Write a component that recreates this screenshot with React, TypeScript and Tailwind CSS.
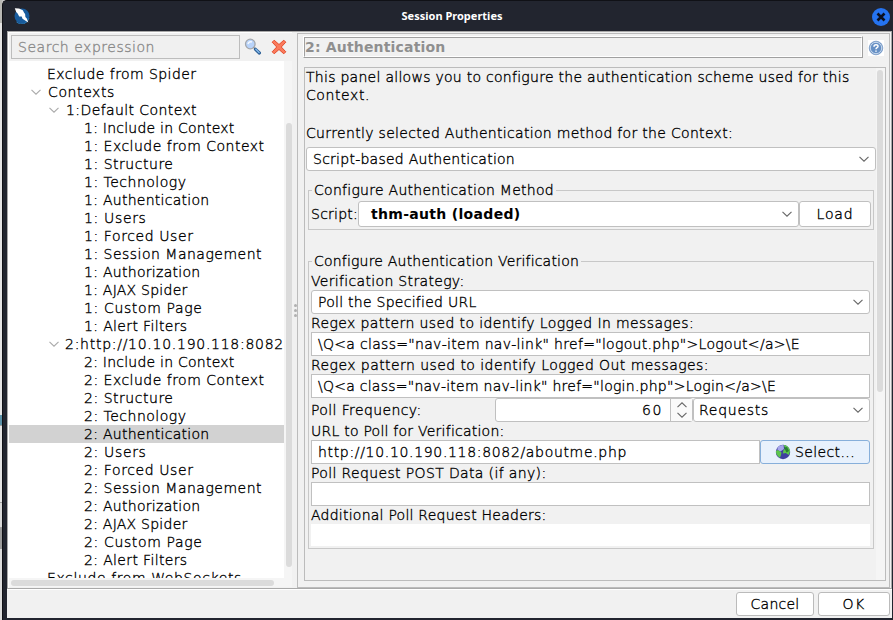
import React from "react";

/* Label whose advance widths are spread evenly over a given width. */
function Txt({ children, w, className = "" }: { children: string; w: number; className?: string }) {
  const ref = React.useRef<HTMLSpanElement>(null);
  const [ls, setLs] = React.useState(0);
  React.useLayoutEffect(() => {
    const el = ref.current!;
    const natural = el.getBoundingClientRect().width;
    setLs((w - natural) / children.length);
  }, []);
  return (
    <span ref={ref} style={{ letterSpacing: ls }} className={`inline-block shrink-0 whitespace-pre ${className}`}>
      {children}
    </span>
  );
}

function Chevron({ className = "text-[#666]", up = false }: { className?: string; up?: boolean }) {
  return (
    <svg width="10" height="6" viewBox="0 0 10 6" className={`shrink-0 ${className}`} fill="none" stroke="currentColor" strokeWidth="1.1">
      <path d={up ? "M0.5 5.2 5 0.8 9.5 5.2" : "M0.5 0.8 5 5.2 9.5 0.8"} />
    </svg>
  );
}

const pages: [string, number][] = [
  ["Include in Context", 150],
  ["Exclude from Context", 180],
  ["Structure", 89],
  ["Technology", 102],
  ["Authentication", 125],
  ["Users", 62],
  ["Forced User", 109],
  ["Session Management", 177.5],
  ["Authorization", 116],
  ["AJAX Spider", 103],
  ["Custom Page", 118],
  ["Alert Filters", 103],
];

function Pages({ n }: { n: number }) {
  return (
    <>
      {pages.map(([name, w]) => (
        <div key={name} className={`h-[18px] pl-[75px] leading-[18px] ${n === 2 && name === "Authentication" ? "bg-[#d2d2d2]" : ""}`}>
          <Txt w={w + 0.5}>{`${n}: ${name}`}</Txt>
        </div>
      ))}
    </>
  );
}

function Tree() {
  return (
    <div className="h-[517px] w-[275px] overflow-hidden bg-white pt-1">
      <div className="h-[18px] pl-[38px] leading-[18px]"><Txt w={149.5}>Exclude from Spider</Txt></div>
      <div className="flex h-[18px] items-center pl-[22px] leading-[18px]">
        <Chevron className="mr-[7px] text-[#aaa]" /><Txt w={67}>Contexts</Txt>
      </div>
      <div className="flex h-[18px] items-center pl-[40px] leading-[18px]">
        <Chevron className="mr-[7px] text-[#aaa]" /><Txt w={131}>1:Default Context</Txt>
      </div>
      <Pages n={1} />
      <div className="flex h-[18px] items-center pl-[40px] leading-[18px]">
        <Chevron className="mr-[6px] text-[#aaa]" /><Txt w={219}>2:http://10.10.190.118:8082</Txt>
      </div>
      <Pages n={2} />
      <div className="h-[18px] pl-[38px] leading-[18px]"><Txt w={195}>Exclude from WebSockets</Txt></div>
    </div>
  );
}

function Row({ children, w }: { children: string; w: number }) {
  return <div className="h-[18px] leading-[18px]"><Txt w={w}>{children}</Txt></div>;
}

function Group({ title, w, className, children }: { title: string; w: number; className: string; children: React.ReactNode }) {
  return (
    <div className={`relative border border-[#c8c8c8] ${className}`}>
      <div className="absolute -top-[10px] left-[3px] h-[18px] bg-[#f1f1f1] pl-[2px] pr-[2px] leading-[18px]"><Txt w={w}>{title}</Txt></div>
      {children}
    </div>
  );
}

const combo = "flex items-center justify-between rounded-[3px] border border-[#c0c0c0] bg-white";
const field = "flex h-6 w-[559px] items-center border border-[#c0c0c0] bg-white pl-[6px]";

export default function App() {
  return (
    <div className="flex h-[620px] w-[893px] overflow-hidden bg-[#c6c6c6] text-[14px] font-extralight text-black [font-family:'DejaVu_Sans',sans-serif] [-webkit-text-stroke:0.35px_currentColor]">
      {/* sliver of the window behind */}
      <div className="flex h-full w-[2px] shrink-0 flex-col">
        <div className="h-[23px] bg-[#b8b8b4]" />
        <div className="h-[392px] bg-[#e4e4e4]" />
        <div className="h-[10px] bg-[#5b91a8]" />
        <div className="h-[78px] border-y border-[#a0a0a0] bg-[#e4e4e4]" />
        <div className="h-[25px] border-b border-[#a0a0a0] bg-[#d8d8d8]" />
        <div className="h-[21px] bg-[#9c9c9c]" />
        <div className="flex-1 bg-[#dcdcdc]" />
      </div>
      <div className="flex h-full w-[891px] flex-col rounded-tl-[5px] border-l border-t border-[#101116] bg-[#22252f]">
        {/* title bar */}
        <div className="flex h-[30px] shrink-0 items-center justify-between pl-[11px] pr-[3px]">
          <svg width="16" height="16" viewBox="0 0 16 16">
            <circle cx="8" cy="8" r="7.5" fill="#185b9c" />
            <path d="M2.5 14A7.5 7.5 0 0 0 15 10" stroke="#2879b8" fill="none" />
            <path d="M.8.3 5 .6 8.800 2.200l1.300 2.600 1 1.200.3 3 1.400 1.500 1.500 4-5.800-3.800-.8-2.100L5.200 8.400 3.800 5.700 2.200 4Z" fill="#fff" />
          </svg>
          <Txt w={103} className="pl-[2px] text-[11px] font-bold text-white [font-family:'Noto_Sans',sans-serif] [-webkit-text-stroke:0]">Session Properties</Txt>
          <svg width="18" height="18" viewBox="0 0 18 18" className="mt-px">
            <circle cx="9" cy="9" r="9" fill="#2573f0" />
            <path d="m5.5 5.5 7 7m0-7-7 7" stroke="#0b1020" strokeWidth="2.6" />
          </svg>
        </div>
        {/* client area */}
        <div className="ml-[4px] flex h-[587px] w-[885px] shrink-0 flex-col bg-[#f1f1f1]">
          <div className="flex h-[558px] shrink-0 border-b border-l border-r border-t border-[#a9a9a9] bg-[#f1f1f1]">
            {/* navigation */}
            <div className="h-full w-[284px] shrink-0 border-l border-t border-white">
              <div className="flex h-[28px] items-start pl-[2px] pt-[2px]">
                <div className="flex h-6 w-[229px] items-center border border-[#bdbdbd] bg-[#f0f0f0] pl-[6px] text-[#8a8a8a]"><Txt w={137}>Search expression</Txt></div>
                <svg width="18" height="18" viewBox="0 0 18 18" className="ml-[4px] mt-[3px]">
                  <circle cx="6.300" cy="6" r="4.800" fill="#b8d3fa" stroke="#a4a7ac" strokeWidth="1.300" />
                  <path d="M4 6c.5-2 2.5-2.5 4-2" stroke="#f3f8ff" strokeWidth="1.600" fill="none" />
                  <path d="m9.800 9.600 1.800 1.700" stroke="#777" strokeWidth="1.300" />
                  <path d="m11.500 11.300 3.900 3.700" stroke="#2b5f96" strokeWidth="3.200" strokeLinecap="round" />
                  <path d="m11.800 11.300 3.300 3.100" stroke="#85b9ea" strokeWidth="1.400" strokeLinecap="round" />
                </svg>
                <svg width="16" height="16" viewBox="0 0 16 16" className="ml-[9px] mt-[4px]">
                  <path d="m3.200 1.200 4.800 4.300 4.800-4.300L14.800 3.200 10.300 8l4.500 4.800-2 2L8 10.500 3.200 14.800 1.200 12.800 5.700 8 1.200 3.200Z" fill="#fb7a5c" stroke="#e34c2c" />
                </svg>
              </div>
              <div className="flex">
                <Tree />
                <div className="h-[517px] w-[8px] bg-[#f5f5f5] pl-[2px] pt-[62px]"><div className="h-[444px] w-[6px] rounded-full bg-[#dbdbdb]" /></div>
              </div>
              <div className="h-[9px] bg-[#f5f5f5] pl-[2px] pt-[2px]"><div className="h-[6px] w-[263px] rounded-full bg-[#dbdbdb]" /></div>
            </div>
            {/* splitter */}
            <div className="flex h-full w-[5px] shrink-0 flex-col items-center justify-center gap-[2px] pl-[1px]">
              <div className="size-[3px] rounded-full bg-[#b0b0b0]" />
              <div className="size-[3px] rounded-full bg-[#b0b0b0]" />
              <div className="size-[3px] rounded-full bg-[#b0b0b0]" />
            </div>
            {/* panel */}
            <div className="mt-px h-[555px] w-[593px] shrink-0 border border-[#bcbcbc] pl-[5px]">
              <div className="flex h-[33px] pt-[2px]">
                <div className="h-[22px] w-[560px] border border-b-[#a0a0a0] border-l-white border-r-[#a0a0a0] border-t-white">
                  <div className="flex h-[20px] w-[558px] items-center border border-b-white border-l-[#a0a0a0] border-r-white border-t-[#a0a0a0] text-[#8f8f8f]">
                    <Txt w={140.5} className="font-bold [-webkit-text-stroke:0]">2: Authentication</Txt>
                  </div>
                </div>
                <div className="ml-[5px] mt-[4px] size-4 bg-white">
                  <svg width="16" height="16" viewBox="0 0 16 16">
                    <circle cx="8" cy="8" r="6.800" fill="#6690c5" stroke="#7b9cc6" strokeWidth=".8" />
                    <circle cx="8" cy="8" r="5.700" fill="none" stroke="#e3ecf7" strokeWidth=".8" />
                    <path d="M6 6.700C6 4.200 10.200 4.200 10 6.500 9.800 7.800 8 7.700 8 9.200m0 1.200v1.400" fill="none" stroke="#fff" strokeWidth="1.500" />
                  </svg>
                </div>
              </div>
              <div className="ml-[1px] flex h-[514px] w-[582px] border border-[#bcbcbc]">
                <div className="h-full w-[571px] shrink-0 pl-px">
                  <div className="h-[18px] leading-[18px]"><Txt w={543.5}>This panel allows you to configure the authentication scheme used for this</Txt></div>
                  <div className="h-[38px] leading-[18px]"><Txt w={64}>Context.</Txt></div>
                  <div className="h-[23px] leading-[18px]"><Txt w={427}>Currently selected Authentication method for the Context:</Txt></div>
                  <div className={`${combo} h-6 w-[570px] pl-[6px] pr-[6px]`}><Txt w={202}>Script-based Authentication</Txt><Chevron /></div>
                  <Group title="Configure Authentication Method" w={240} className="ml-[2px] mt-[19px] h-[40px] w-[566px] pl-[2px] pt-[10px]">
                    <div className="flex items-center">
                      <div className="w-[47px] shrink-0"><Txt w={47}>Script:</Txt></div>
                      <div className={`${combo} h-[26px] w-[441px] shrink-0 pl-[12px] pr-[6px]`}><Txt w={149.5} className="font-bold [-webkit-text-stroke:0]">thm-auth (loaded)</Txt><Chevron /></div>
                      <div className="flex h-[26px] w-[72px] shrink-0 items-center justify-center rounded-[3px] border border-[#c0c0c0] bg-white"><Txt w={37}>Load</Txt></div>
                    </div>
                  </Group>
                  <Group title="Configure Authentication Verification" w={265} className="ml-[2px] mt-[31px] h-[288px] w-[566px] pl-[2px] pt-[10px]">
                    <Row w={153.5}>Verification Strategy:</Row>
                    <div className={`${combo} h-6 w-[559px] pl-[6px] pr-[6px]`}><Txt w={158.5}>Poll the Specified URL</Txt><Chevron /></div>
                    <Row w={383}>Regex pattern used to identify Logged In messages:</Row>
                    <div className={field}><Txt w={482}>{'\\Q<a class="nav-item nav-link" href="logout.php">Logout</a>\\E'}</Txt></div>
                    <Row w={398}>Regex pattern used to identify Logged Out messages:</Row>
                    <div className={field}><Txt w={458}>{'\\Q<a class="nav-item nav-link" href="login.php">Login</a>\\E'}</Txt></div>
                    <div className="flex h-6 w-[559px] items-center">
                      <div className="w-[184px] shrink-0"><Txt w={110.5}>Poll Frequency:</Txt></div>
                      <div className="flex h-6 w-[198px] shrink-0 rounded-[3px] border border-[#c0c0c0] bg-white">
                        <div className="flex w-[175px] items-center justify-end border-r border-[#c0c0c0] pr-[7px]"><Txt w={21}>60</Txt></div>
                        <div className="flex flex-1 flex-col items-center justify-center gap-[4px] bg-[#fafafa]"><Chevron up /><Chevron /></div>
                      </div>
                      <div className={`${combo} h-6 w-[177px] shrink-0 pl-[5px] pr-[6px]`}><Txt w={70}>Requests</Txt><Chevron /></div>
                    </div>
                    <Row w={193.5}>URL to Poll for Verification:</Row>
                    <div className="flex h-6 w-[559px]">
                      <div className="flex h-6 w-[449px] items-center border border-[#c0c0c0] bg-white pl-[6px]"><Txt w={309}>http://10.10.190.118:8082/aboutme.php</Txt></div>
                      <div className="flex h-6 w-[110px] items-center rounded-[3px] border border-[#87afda] bg-[#e8f1fc] pl-[14px]">
                        <svg width="16" height="16" viewBox="0 0 16 16">
                          <circle cx="8" cy="8" r="7.200" fill="#403fa0" />
                          <path d="M2.500 3.500C4 1.500 6.500.8 8.500 1L9 5 5.500 7.500 2.500 6Z" fill="#a5a5ea" />
                          <path d="M8.500 1c3.500 0 6 2.500 6.600 6l-1.300 4-3-2-3 .5L8.500 6l2-1.500ZM.9 7l2.100-1 3.500 2.500L6 11l-1 2.800C2.500 12.500.9 10 .9 7Z" fill="#5cc54d" />
                          <path d="M9 3.500 12 3l2 4-2.500 1.500Z" fill="#287e32" />
                        </svg>
                        <Txt w={60} className="ml-[4px]">Select...</Txt>
                      </div>
                    </div>
                    <Row w={235.5}>Poll Request POST Data (if any):</Row>
                    <div className={field} />
                    <Row w={235.5}>Additional Poll Request Headers:</Row>
                    <div className="h-[22px] w-[559px] bg-white" />
                  </Group>
                </div>
                <div className="h-full w-[9px] bg-[#f5f5f5] pl-[1px] pt-[2px]"><div className="h-[322px] w-[6px] rounded-full bg-[#dbdbdb]" /></div>
              </div>
            </div>
          </div>
          {/* buttons */}
          <div className="flex flex-1 justify-end gap-[4px] border-t border-white pr-[2px] pt-[2px]">
            <div className="flex h-6 w-[78px] items-center justify-center rounded-[3px] border border-[#bbb] bg-white"><Txt w={49}>Cancel</Txt></div>
            <div className="flex h-6 w-[72px] items-center justify-center rounded-[3px] border border-[#bbb] bg-white"><Txt w={23}>OK</Txt></div>
          </div>
        </div>
      </div>
    </div>
  );
}
